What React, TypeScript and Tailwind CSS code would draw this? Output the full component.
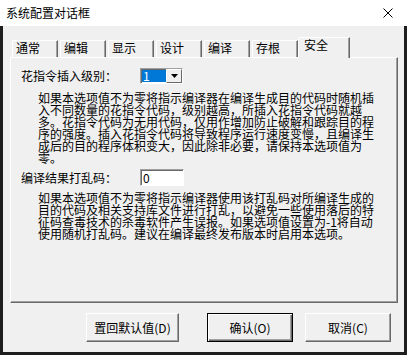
import React from "react";

const font = { fontFamily: '"Noto Sans CJK SC", "Noto Sans", sans-serif' };

export default function App() {
  const tabs = ["通常", "编辑", "显示", "设计", "编译", "存根"];

  const para1 = [
    "如果本选项值不为零将指示编译器在编译生成目的代码时随机插",
    "入不同数量的花指令代码，级别越高，所插入花指令代码就越",
    "多。花指令代码为无用代码，仅用作增加防止破解和跟踪目的程",
    "序的强度。插入花指令代码将导致程序运行速度变慢，且编译生",
    "成后的目的程序体积变大，因此除非必要，请保持本选项值为",
    "零。",
  ];

  const para2 = [
    "如果本选项值不为零将指示编译器使用该打乱码对所编译生成的",
    "目的代码及相关支持库文件进行打乱，以避免一些使用落后的特",
    "征码查毒技术的杀毒软件产生误报。如果选项值设置为-1将自动",
    "使用随机打乱码。建议在编译最终发布版本时启用本选项。",
  ];

  const buttons = [
    { label: "置回默认值(D)", width: "w-[93px]", gap: "ml-[83px]", primary: false },
    { label: "确认(O)", width: "w-[86px]", gap: "ml-[28px]", primary: true },
    { label: "取消(C)", width: "w-[86px]", gap: "ml-[12px]", primary: false },
  ];

  return (
    <div
      className="w-[407px] h-[355px] bg-[#1e1e1e] flex flex-col overflow-hidden text-[12px] leading-[12px] text-black"
      style={font}
    >
      {/* Title bar */}
      <div className="h-[26px] bg-white flex items-center justify-between pl-[6px] pr-[14px]">
        <span className="leading-[12px]">系统配置对话框</span>
        <svg width="10" height="10" viewBox="0 0 10 10">
          <path d="M0.5 0.5 L9.5 9.5 M9.5 0.5 L0.5 9.5" stroke="#000" strokeWidth="1" />
        </svg>
      </div>

      {/* Client area */}
      <div className="flex-1 mx-[3px] mb-[3px] bg-[#f0f0f0] flex flex-col pt-[11px] pl-[7px]">
        {/* Tabs */}
        <div className="h-[20px] flex items-end pl-[2px]">
          {tabs.map((t, i) => (
            <div
              key={t}
              className={`h-[17px] w-[46px] ${i < 5 ? "mr-[2px]" : ""} border-l border-t border-r border-l-white border-t-white border-r-[#696969] shadow-[inset_-1px_0_#a0a0a0] rounded-tl-[2px] pl-[3px] pt-px whitespace-nowrap`}
            >
              {t}
            </div>
          ))}
          <div className="relative z-10 -mb-px h-[21px] w-[52px] bg-[#f0f0f0] border-l border-t border-r border-l-white border-t-white border-r-[#696969] shadow-[inset_-1px_0_#a0a0a0] rounded-tl-[2px] pl-[5px] pt-[1px] whitespace-nowrap">
            安全
          </div>
        </div>

        {/* Panel */}
        <div className="w-[388px] h-[246px] border border-l-white border-t-white border-r-[#696969] border-b-[#696969] shadow-[inset_-1px_-1px_#a0a0a0] flex flex-col">
          {/* Row 1 */}
          <div className="mt-[10px] ml-[10px] h-[16px] flex items-center">
            <span className="w-[119px] whitespace-nowrap">花指令插入级别：</span>
            <div className="w-[43px] h-[16px] flex bg-white border border-t-[#a0a0a0] border-l-[#a0a0a0] border-r-white border-b-white shadow-[inset_1px_1px_#696969]">
              <div className="flex-1 pl-px pt-px pb-px pr-0">
                <div className="h-full bg-[#0078d7] text-white pl-[1px] flex items-center">1</div>
              </div>
              <div className="w-[16px] h-full bg-[#f0f0f0] border border-t-white border-l-white border-r-[#696969] border-b-[#696969] flex items-center justify-center">
                <svg width="7" height="4" viewBox="0 0 7 4">
                  <path d="M0 0 H7 L3.5 4 Z" fill="#000" />
                </svg>
              </div>
            </div>
          </div>

          {/* Paragraph 1 */}
          <div className="mt-[8px] ml-[27px] flex flex-col">
            {para1.map((l, i) => (
              <div key={i} className="whitespace-nowrap h-[12px]">
                {l}
              </div>
            ))}
          </div>

          {/* Row 2 */}
          <div className="mt-[5px] ml-[10px] h-[17px] flex items-center">
            <span className="w-[119px] whitespace-nowrap">编译结果打乱码：</span>
            <div className="w-[44px] h-[17px] bg-white border border-t-[#a0a0a0] border-l-[#a0a0a0] border-r-white border-b-white shadow-[inset_1px_1px_#696969] pl-[2px] flex items-center">
              0
            </div>
          </div>

          {/* Paragraph 2 */}
          <div className="mt-[6px] ml-[27px] flex flex-col">
            {para2.map((l, i) => (
              <div key={i} className="whitespace-nowrap h-[12px]">
                {l}
              </div>
            ))}
          </div>
        </div>

        {/* Buttons */}
        <div className="mt-[10px] h-[29px] flex -ml-[7px]">
          {buttons.map((b) => (
            <div
              key={b.label}
              className={`${b.width} ${b.gap} h-[29px] bg-[#f0f0f0] flex items-center justify-center whitespace-nowrap border ${
                b.primary
                  ? "border-black shadow-[inset_1px_1px_#fff,inset_-1px_-1px_#696969,inset_-2px_-2px_#a0a0a0]"
                  : "border-t-white border-l-white border-r-[#696969] border-b-[#696969] shadow-[inset_-1px_-1px_#a0a0a0]"
              }`}
            >
              {b.label}
            </div>
          ))}
        </div>
      </div>
    </div>
  );
}
